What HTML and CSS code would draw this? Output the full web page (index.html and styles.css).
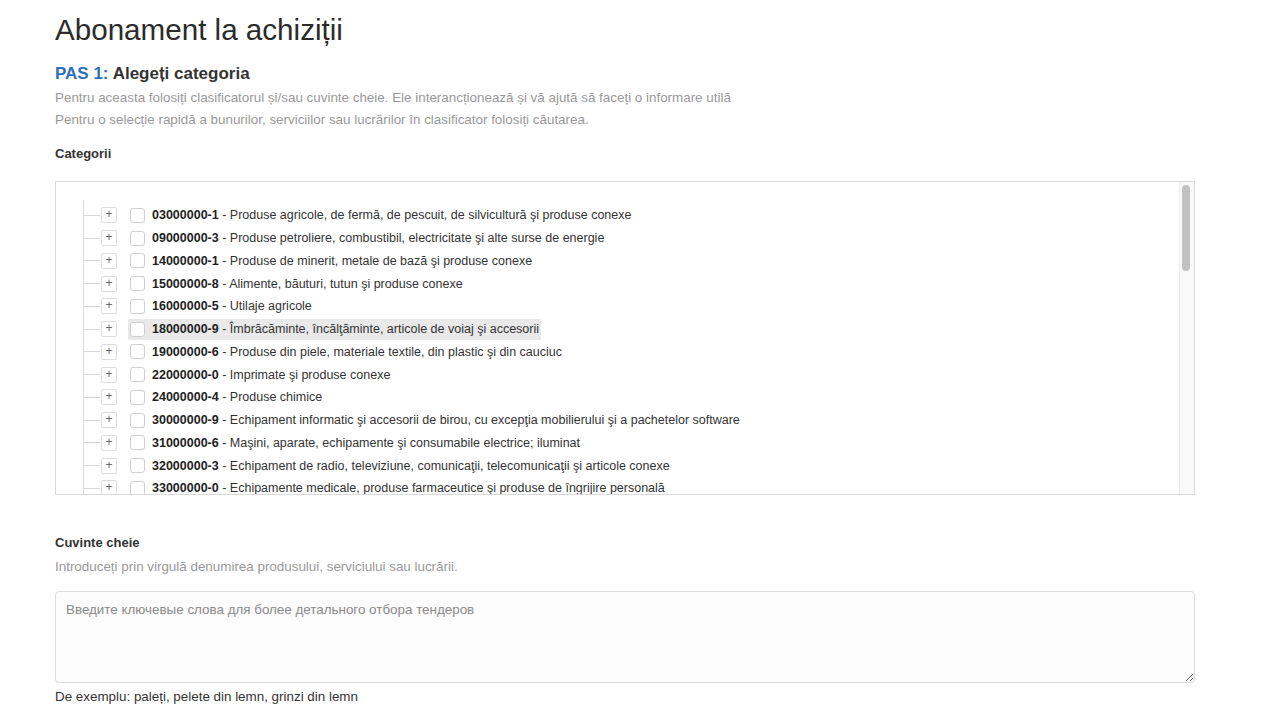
FILE: index.html
```html
<!DOCTYPE html>
<html lang="ro">
<head>
<meta charset="utf-8">
<title>Abonament la achiziții</title>
<link rel="stylesheet" href="styles.css">
</head>
<body>
<div class="page">
  <h1 class="title">Abonament la achiziții</h1>
  <h2 class="step"><span class="step-num">PAS 1:</span> Alegeți categoria</h2>
  <p class="hint">Pentru aceasta folosiți clasificatorul și/sau cuvinte cheie. Ele interancționează și vă ajută să faceți o informare utilă</p>
  <p class="hint">Pentru o selecție rapidă a bunurilor, serviciilor sau lucrărilor în clasificator folosiți căutarea.</p>

  <div class="label label-cat">Categorii</div>
  <div class="tree-box">
    <div class="tree-view">
      <ul class="tree">
        <li class="row"><span class="conn"></span><span class="toggle">+</span><span class="node"><span class="check"></span><span class="text"><b>03000000-1</b> - Produse agricole, de fermă, de pescuit, de silvicultură şi produse conexe</span></span></li>
        <li class="row"><span class="conn"></span><span class="toggle">+</span><span class="node"><span class="check"></span><span class="text"><b>09000000-3</b> - Produse petroliere, combustibil, electricitate şi alte surse de energie</span></span></li>
        <li class="row"><span class="conn"></span><span class="toggle">+</span><span class="node"><span class="check"></span><span class="text"><b>14000000-1</b> - Produse de minerit, metale de bază şi produse conexe</span></span></li>
        <li class="row"><span class="conn"></span><span class="toggle">+</span><span class="node"><span class="check"></span><span class="text"><b>15000000-8</b> - Alimente, băuturi, tutun şi produse conexe</span></span></li>
        <li class="row"><span class="conn"></span><span class="toggle">+</span><span class="node"><span class="check"></span><span class="text"><b>16000000-5</b> - Utilaje agricole</span></span></li>
        <li class="row"><span class="conn"></span><span class="toggle">+</span><span class="node hover"><span class="check"></span><span class="text"><b>18000000-9</b> - Îmbrăcăminte, încălţăminte, articole de voiaj şi accesorii</span></span></li>
        <li class="row"><span class="conn"></span><span class="toggle">+</span><span class="node"><span class="check"></span><span class="text"><b>19000000-6</b> - Produse din piele, materiale textile, din plastic şi din cauciuc</span></span></li>
        <li class="row"><span class="conn"></span><span class="toggle">+</span><span class="node"><span class="check"></span><span class="text"><b>22000000-0</b> - Imprimate şi produse conexe</span></span></li>
        <li class="row"><span class="conn"></span><span class="toggle">+</span><span class="node"><span class="check"></span><span class="text"><b>24000000-4</b> - Produse chimice</span></span></li>
        <li class="row"><span class="conn"></span><span class="toggle">+</span><span class="node"><span class="check"></span><span class="text"><b>30000000-9</b> - Echipament informatic şi accesorii de birou, cu excepţia mobilierului şi a pachetelor software</span></span></li>
        <li class="row"><span class="conn"></span><span class="toggle">+</span><span class="node"><span class="check"></span><span class="text"><b>31000000-6</b> - Maşini, aparate, echipamente şi consumabile electrice; iluminat</span></span></li>
        <li class="row"><span class="conn"></span><span class="toggle">+</span><span class="node"><span class="check"></span><span class="text"><b>32000000-3</b> - Echipament de radio, televiziune, comunicaţii, telecomunicaţii şi articole conexe</span></span></li>
        <li class="row"><span class="conn"></span><span class="toggle">+</span><span class="node"><span class="check"></span><span class="text"><b>33000000-0</b> - Echipamente medicale, produse farmaceutice şi produse de îngrijire personală</span></span></li>
      </ul>
    </div>
    <div class="scrollbar"><div class="thumb"></div></div>
  </div>

  <div class="label label-kw">Cuvinte cheie</div>
  <p class="hint hint-kw">Introduceți prin virgulă denumirea produsului, serviciului sau lucrării.</p>
  <textarea class="keywords" placeholder="Введите ключевые слова для более детального отбора тендеров"></textarea>
  <div class="example">De exemplu: paleți, pelete din lemn, grinzi din lemn</div>
</div>
</body>
</html>
```

FILE: styles.css
```css
html, body {
  margin: 0;
  padding: 0;
  background: #fff;
}

body {
  font-family: "Liberation Sans", Arial, sans-serif;
  color: #333;
}

.page {
  width: 1140px;
  margin-left: 55px;
  padding-top: 12px;
}

.title {
  margin: 0;
  font-size: 29.6px;
  line-height: 36px;
  font-weight: 400;
  color: #2b2b2b;
}

.step {
  margin: 16px 0 0;
  font-size: 17px;
  line-height: 20px;
  font-weight: 700;
  color: #333;
}

.step-num {
  color: #2d6fba;
}

.hint {
  margin: 0;
  font-size: 13.4px;
  line-height: 22px;
  color: #999;
}

.step + .hint {
  margin-top: 3px;
}

.label {
  font-size: 13px;
  line-height: 18px;
  font-weight: 700;
  color: #333;
}

.label-cat {
  margin-top: 14px;
}

.tree-box {
  margin-top: 18px;
  height: 314px;
  box-sizing: border-box;
  border: 1px solid #d9d9d9;
  display: flex;
}

.tree-view {
  flex: 1;
  overflow: hidden;
  padding: 18px 0 0 27px;
}

.scrollbar {
  width: 12px;
  border-left: 1px solid #ececec;
  background: #f9f9f9;
  padding: 3px 0 0 2px;
  box-sizing: content-box;
}

.thumb {
  width: 8px;
  height: 86px;
  border-radius: 4px;
  background: #c1c1c1;
}

.tree {
  list-style: none;
  margin: 0;
  padding: 4px 0 0;
  border-left: 1px solid #dcdcdc;
}

.row {
  display: flex;
  align-items: center;
  height: 22.75px;
  font-size: 12.5px;
  white-space: nowrap;
}

.conn {
  width: 16px;
  height: 1px;
  background: #d6d6d6;
  margin-right: 1px;
}

.toggle {
  box-sizing: border-box;
  width: 16px;
  height: 16px;
  border: 1px solid #dedede;
  border-radius: 2px;
  font-size: 12px;
  line-height: 13px;
  text-align: center;
  color: #666;
  margin-right: 11px;
}

.node {
  display: flex;
  align-items: center;
  height: 21px;
  padding: 0 2px;
}

.node.hover {
  background: #e9e9e9;
}

.check {
  box-sizing: border-box;
  width: 15px;
  height: 15px;
  border: 1px solid #cfcfcf;
  border-radius: 3px;
  background: #fff;
  margin-right: 7px;
}

.text {
  color: #333;
}

.text b {
  color: #222;
}

.label-kw {
  margin-top: 39px;
}

.hint-kw {
  margin-top: 4px;
}

.keywords {
  display: block;
  margin-top: 13px;
  width: 1140px;
  height: 92px;
  box-sizing: border-box;
  border: 1px solid #dcdcdc;
  border-radius: 4px;
  background: #fcfcfc;
  padding: 9px 10px;
  font-family: "Liberation Sans", Arial, sans-serif;
  font-size: 13.4px;
  line-height: 18px;
  color: #333;
}

.keywords::placeholder {
  color: #8a8a8a;
}

.example {
  margin-top: 5px;
  font-size: 13.4px;
  line-height: 18px;
  color: #333;
}
```
